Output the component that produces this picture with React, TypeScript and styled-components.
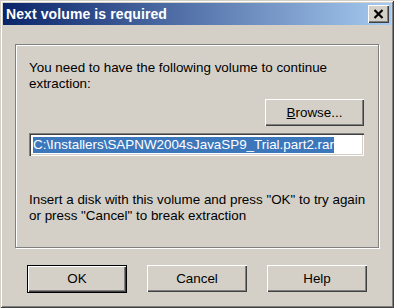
import React from 'react';
import styled, { createGlobalStyle } from 'styled-components';

const GlobalStyle = createGlobalStyle`
  html, body {
    margin: 0;
    padding: 0;
    background: #d4d0c8;
  }
  body {
    font-family: "Liberation Sans", Arial, sans-serif;
    font-size: 13.4px;
    color: #000;
  }
`;

const Window = styled.div`
  width: 394px;
  height: 308px;
  box-sizing: border-box;
  background: #d4d0c8;
  padding: 3px;
  display: flex;
  flex-direction: column;
  box-shadow:
    inset 1px 1px 0 #d4d0c8,
    inset -1px -1px 0 #404040,
    inset 2px 2px 0 #ffffff,
    inset -2px -2px 0 #808080;
`;

const TitleBar = styled.div`
  height: 22px;
  display: flex;
  align-items: center;
  justify-content: space-between;
  padding: 0 2px 0 3px;
  background: linear-gradient(to right, #0a246a 0%, #a6caf0 100%);
`;

const TitleText = styled.span`
  color: #fff;
  font-weight: bold;
  font-size: 14px;
  letter-spacing: 0.1px;
`;

const CloseButton = styled.div`
  width: 21px;
  height: 18px;
  box-sizing: border-box;
  background: #d4d0c8;
  display: flex;
  align-items: center;
  justify-content: center;
  padding-bottom: 1px;
  box-shadow:
    inset 1px 1px 0 #ffffff,
    inset -1px -1px 0 #404040,
    inset -2px -2px 0 #808080;
`;

const Body = styled.div`
  flex: 1;
  display: flex;
  flex-direction: column;
  padding: 19px 12px 0 12px;
`;

const GroupBox = styled.div`
  height: 204px;
  box-sizing: border-box;
  border: 1px solid #808080;
  box-shadow: 1px 1px 0 #ffffff, inset 1px 1px 0 #ffffff;
  padding: 15px 14px 0 13px;
  display: flex;
  flex-direction: column;
`;

const Para = styled.p<{ $top?: number }>`
  margin: ${p => p.$top ?? 0}px 0 0 0;
  line-height: 16px;
  white-space: nowrap;
`;

const BrowseRow = styled.div`
  display: flex;
  justify-content: flex-end;
  margin-top: 7px;
`;

const Button = styled.div<{ $default?: boolean; $w?: number }>`
  width: ${p => p.$w ?? 100}px;
  height: ${p => (p.$default ? 28 : 27)}px;
  box-sizing: border-box;
  background: #d4d0c8;
  display: flex;
  align-items: center;
  justify-content: center;
  padding-bottom: 1px;
  box-shadow: inset 1px 1px 0 #ffffff, inset -1px -1px 0 #404040, inset -2px -2px 0 #808080;
  ${p => p.$default && `border: 1px solid #000;`}
`;

const Edit = styled.div`
  margin-top: 7px;
  height: 23px;
  box-sizing: border-box;
  background: #fff;
  display: flex;
  align-items: center;
  padding-left: 4px;
  box-shadow:
    inset 1px 1px 0 #808080,
    inset 2px 2px 0 #404040,
    inset -1px -1px 0 #ffffff,
    inset -2px -2px 0 #d4d0c8;
`;

const Selected = styled.span`
  background: #3d77bb;
  color: #fff;
  line-height: 16px;
  white-space: nowrap;
`;

const ButtonRow = styled.div`
  display: flex;
  gap: 20px;
  margin-top: 17px;
  padding-left: 12px;
`;

export default function App() {
  return (
    <>
      <GlobalStyle />
      <Window>
        <TitleBar>
          <TitleText>Next volume is required</TitleText>
          <CloseButton>
            <svg width="11" height="10" viewBox="0 0 11 10">
              <path d="M1.5 1L9.5 9M9.5 1L1.5 9" stroke="#000" strokeWidth="2.2" />
            </svg>
          </CloseButton>
        </TitleBar>
        <Body>
          <GroupBox>
            <Para>
              You need to have the following volume to continue
              <br />
              extraction:
            </Para>
            <BrowseRow>
              <Button $w={99}>
                <span>
                  <u>B</u>rowse...
                </span>
              </Button>
            </BrowseRow>
            <Edit>
              <Selected>C:\Installers\SAPNW2004sJavaSP9_Trial.part2.rar</Selected>
            </Edit>
            <Para $top={36}>
              Insert a disk with this volume and press "OK" to try again
              <br />
              or press "Cancel" to break extraction
            </Para>
          </GroupBox>
          <ButtonRow>
            <Button $default>OK</Button>
            <Button>Cancel</Button>
            <Button>Help</Button>
          </ButtonRow>
        </Body>
      </Window>
    </>
  );
}
